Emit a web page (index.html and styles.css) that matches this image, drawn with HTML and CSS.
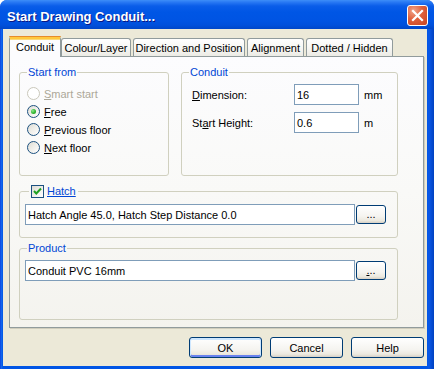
FILE: index.html
```html
<!DOCTYPE html>
<html lang="en">
  <head>
    <meta charset="utf-8" />
    <title>Start Drawing Conduit...</title>
    <link rel="stylesheet" href="styles.css">
  </head>
  <body>
    <div class="window">
      <div class="titlebar">
        <span class="title">Start Drawing Conduit...</span>
        <span class="close-button">
          <svg width="13" height="13" viewBox="0 0 13 13">
            <path d="M2 2 L11 11 M11 2 L2 11" stroke="#ffffff" stroke-width="2.2" stroke-linecap="square" fill="none" />
          </svg>
        </span>
      </div>

      <div class="client">
        <div class="tabs">
          <div class="tab tab-active tab-conduit">Conduit</div>
          <div class="tab tab-colour">Colour/Layer</div>
          <div class="tab tab-direction">Direction and Position</div>
          <div class="tab tab-alignment">Alignment</div>
          <div class="tab tab-dotted">Dotted / Hidden</div>
        </div>

        <div class="pane">
          <div class="top-row">
            <fieldset class="group group-start">
              <legend>Start from</legend>
              <div class="radio-list">
                <label class="radio-row radio-disabled"><span class="radio"></span><span><u>S</u>mart start</span></label>
                <label class="radio-row"><span class="radio radio-checked"></span><span><u>F</u>ree</span></label>
                <label class="radio-row"><span class="radio"></span><span><u>P</u>revious floor</span></label>
                <label class="radio-row"><span class="radio"></span><span><u>N</u>ext floor</span></label>
              </div>
            </fieldset>

            <fieldset class="group group-conduit">
              <legend>Conduit</legend>
              <div class="field-list">
                <div class="field-row">
                  <span class="field-label"><u>D</u>imension:</span>
                  <div class="textbox textbox-small">16</div>
                  <span class="unit">mm</span>
                </div>
                <div class="field-row">
                  <span class="field-label">St<u>a</u>rt Height:</span>
                  <div class="textbox textbox-small">0.6</div>
                  <span class="unit">m</span>
                </div>
              </div>
            </fieldset>
          </div>

          <fieldset class="group group-hatch">
            <legend class="legend-check">
              <span class="checkbox">
                <svg width="11" height="11" viewBox="0 0 11 11">
                  <path d="M2 5 L4.3 7.5 L9 2.5" stroke="#21a121" stroke-width="2" fill="none" />
                </svg>
              </span>
              <span class="check-label"><u>Hatch</u></span>
            </legend>
            <div class="browse-row">
              <div class="textbox textbox-wide">Hatch Angle 45.0, Hatch Step Distance 0.0</div>
              <button class="btn btn-browse">...</button>
            </div>
          </fieldset>

          <fieldset class="group group-product">
            <legend>Product</legend>
            <div class="browse-row">
              <div class="textbox textbox-wide">Conduit PVC 16mm</div>
              <button class="btn btn-browse"><u>.</u>..</button>
            </div>
          </fieldset>
        </div>

        <div class="dialog-buttons">
          <button class="btn btn-dialog btn-default">OK</button>
          <button class="btn btn-dialog">Cancel</button>
          <button class="btn btn-dialog">Help</button>
        </div>
      </div>
    </div>
  </body>
</html>
```

FILE: styles.css
```css
:root {
  --face-color: #ece9d8;
  --frame-color: #0055e5;
  --group-border: #d0d0bf;
  --legend-color: #0046d5;
  --tab-border: #919b9c;
  --field-border: #7f9db9;
  --button-border: #003c74;
}

body {
  margin: 0;
  width: 434px;
  height: 369px;
  overflow: hidden;
  font-family: "Liberation Sans", Arial, sans-serif;
  font-size: 11px;
  color: #000000;
  background-color: #ffffff;
}

.window {
  width: 434px;
  height: 369px;
  display: flex;
  flex-direction: column;
  background: linear-gradient(to right, #0831d9 0, #166aee 1px, #0055e5 3px, #0055e5 427px, #0a58e8 429px, #0041c0 434px);
  border-radius: 7px 7px 0 0;
  box-sizing: border-box;
}

/* title bar */
.titlebar {
  height: 29px;
  flex-shrink: 0;
  display: flex;
  align-items: center;
  justify-content: space-between;
  padding: 2px 6px 0 7px;
  box-sizing: border-box;
  border-radius: 7px 7px 0 0;
  background: linear-gradient(to bottom, #3d8ef8 0, #2a7af4 2px, #0a5de9 6px, #0056e5 12px, #0054e3 20px, #0050dc 25px, #0046c8 29px);
}

.title {
  color: #ffffff;
  font-weight: bold;
  font-size: 13px;
  margin-top: 1px;
  text-shadow: 1px 1px 0 #0a1883;
}

.close-button {
  width: 21px;
  height: 21px;
  box-sizing: border-box;
  border: 1px solid #ffffff;
  border-radius: 3px;
  display: flex;
  align-items: center;
  justify-content: center;
  background: radial-gradient(circle at 30% 25%, #f0a48a 0, #e0603c 45%, #c8431f 100%);
}

/* client area */
.client {
  flex: 1;
  margin: 0 7px 3px 3px;
  padding: 7px 3px 0 6px;
  background-color: var(--face-color);
  display: flex;
  flex-direction: column;
}

/* tabs */
.tabs {
  display: flex;
  align-items: flex-end;
  height: 20px;
  position: relative;
  z-index: 1;
}

.tab {
  height: 18px;
  box-sizing: border-box;
  border: 1px solid var(--tab-border);
  border-bottom: none;
  border-radius: 3px 3px 0 0;
  background: linear-gradient(to bottom, #ffffff 0, #f7f7f4 50%, #ecebe5 100%);
  display: flex;
  align-items: center;
  justify-content: center;
  padding-top: 1px;
  margin-left: 2px;
  white-space: nowrap;
}

.tab-active {
  height: 21px;
  margin-bottom: -1px;
  margin-left: 0;
  background: #fcfcfe;
  border-top: 3px solid #ffc83c;
  box-shadow: inset 0 1px 0 #fbd978;
  padding-top: 0;
  padding-bottom: 2px;
  position: relative;
}

.tab-active:before {
  content: "";
  position: absolute;
  left: -1px;
  right: -1px;
  top: -3px;
  height: 1px;
  background: #e68b2c;
  border-radius: 3px 3px 0 0;
}

.tab-conduit { width: 52px; }
.tab-colour { width: 70px; margin-left: 0; }
.tab-direction { width: 112px; }
.tab-alignment { width: 57px; margin-left: 2px; }
.tab-dotted { width: 87px; }

/* tab pane */
.pane {
  height: 272px;
  box-sizing: border-box;
  border: 1px solid var(--tab-border);
  background: linear-gradient(to bottom, #fcfcfe 0, #f9f9f7 50%, #f4f3ee 100%);
  box-shadow: 1px 1px 0 #d0cdbd;
  padding: 9px 25px 0 9px;
}

.top-row {
  display: flex;
  gap: 12px;
}

/* group boxes */
.group {
  margin: 0;
  padding: 0;
  min-width: 0;
  box-sizing: border-box;
  border: 1px solid var(--group-border);
  border-radius: 3px;
}

.group legend {
  margin-left: 7px;
  padding: 0 1px;
  line-height: 13px;
  color: var(--legend-color);
}

.group-start {
  width: 150px;
  height: 110px;
}

.group-conduit {
  width: 217px;
  height: 110px;
}

.group-hatch {
  margin-top: 9px;
  padding-bottom: 12px;
}

.group-product {
  margin-top: 4px;
  height: 78px;
}

/* radios */
.radio-list {
  margin-top: 8px;
  padding-left: 7px;
  display: flex;
  flex-direction: column;
  gap: 5px;
}

.radio-row {
  display: flex;
  align-items: center;
  gap: 4px;
  height: 13px;
}

.radio {
  width: 13px;
  height: 13px;
  box-sizing: border-box;
  border: 1px solid #1c5180;
  border-radius: 50%;
  background: linear-gradient(135deg, #dcdbd3 0, #eeede8 45%, #ffffff 100%);
  display: flex;
  align-items: center;
  justify-content: center;
}

.radio-checked:after {
  content: "";
  width: 5px;
  height: 5px;
  border-radius: 50%;
  background: radial-gradient(circle at 35% 35%, #8de88d 0, #2fb52f 55%, #1a8f1a 100%);
}

.radio-disabled {
  color: #aca899;
}

.radio-disabled .radio {
  border-color: #cac8bb;
  background: #ffffff;
}

/* conduit fields */
.field-list {
  margin-top: 5px;
  padding-left: 10px;
  display: flex;
  flex-direction: column;
  gap: 7px;
}

.field-row {
  display: flex;
  align-items: center;
  height: 21px;
}

.field-label {
  width: 102px;
}

.unit {
  margin-left: 5px;
}

.textbox {
  height: 21px;
  box-sizing: border-box;
  border: 1px solid var(--field-border);
  background-color: #ffffff;
  padding: 0 2px;
  display: flex;
  align-items: center;
  white-space: nowrap;
}

.textbox-small {
  width: 65px;
}

.textbox-wide {
  width: 330px;
}

/* hatch legend with checkbox */
.group .legend-check {
  margin-left: 9px;
  padding: 0 2px;
  display: flex;
  align-items: center;
  gap: 3px;
}

.checkbox {
  width: 13px;
  height: 13px;
  box-sizing: border-box;
  border: 1px solid #1c5180;
  background: linear-gradient(135deg, #dcdbd3 0, #eeede8 45%, #ffffff 100%);
  display: flex;
  align-items: center;
  justify-content: center;
}

.browse-row {
  display: flex;
  align-items: center;
  margin-top: 5px;
  padding-left: 5px;
}

.group-hatch .browse-row {
  margin-top: 6px;
}

/* buttons */
.btn {
  font-family: "Liberation Sans", Arial, sans-serif;
  font-size: 11px;
  color: #000000;
  box-sizing: border-box;
  border: 1px solid var(--button-border);
  border-radius: 3px;
  background: linear-gradient(to bottom, #ffffff 0, #f5f4f0 60%, #ece9df 85%, #d6d0c5 100%);
  padding: 0;
  margin: 0;
  cursor: pointer;
}

.btn-browse {
  width: 30px;
  height: 19px;
  margin-left: 1px;
  padding-bottom: 2px;
}

.dialog-buttons {
  margin-top: 9px;
  display: flex;
  justify-content: flex-end;
  gap: 8px;
}

.btn-dialog {
  width: 73px;
  height: 21px;
}

.btn-default {
  box-shadow: inset 0 1px 0 1px #cee7ff, inset 0 -1px 0 1px #6982ee;
}
```
